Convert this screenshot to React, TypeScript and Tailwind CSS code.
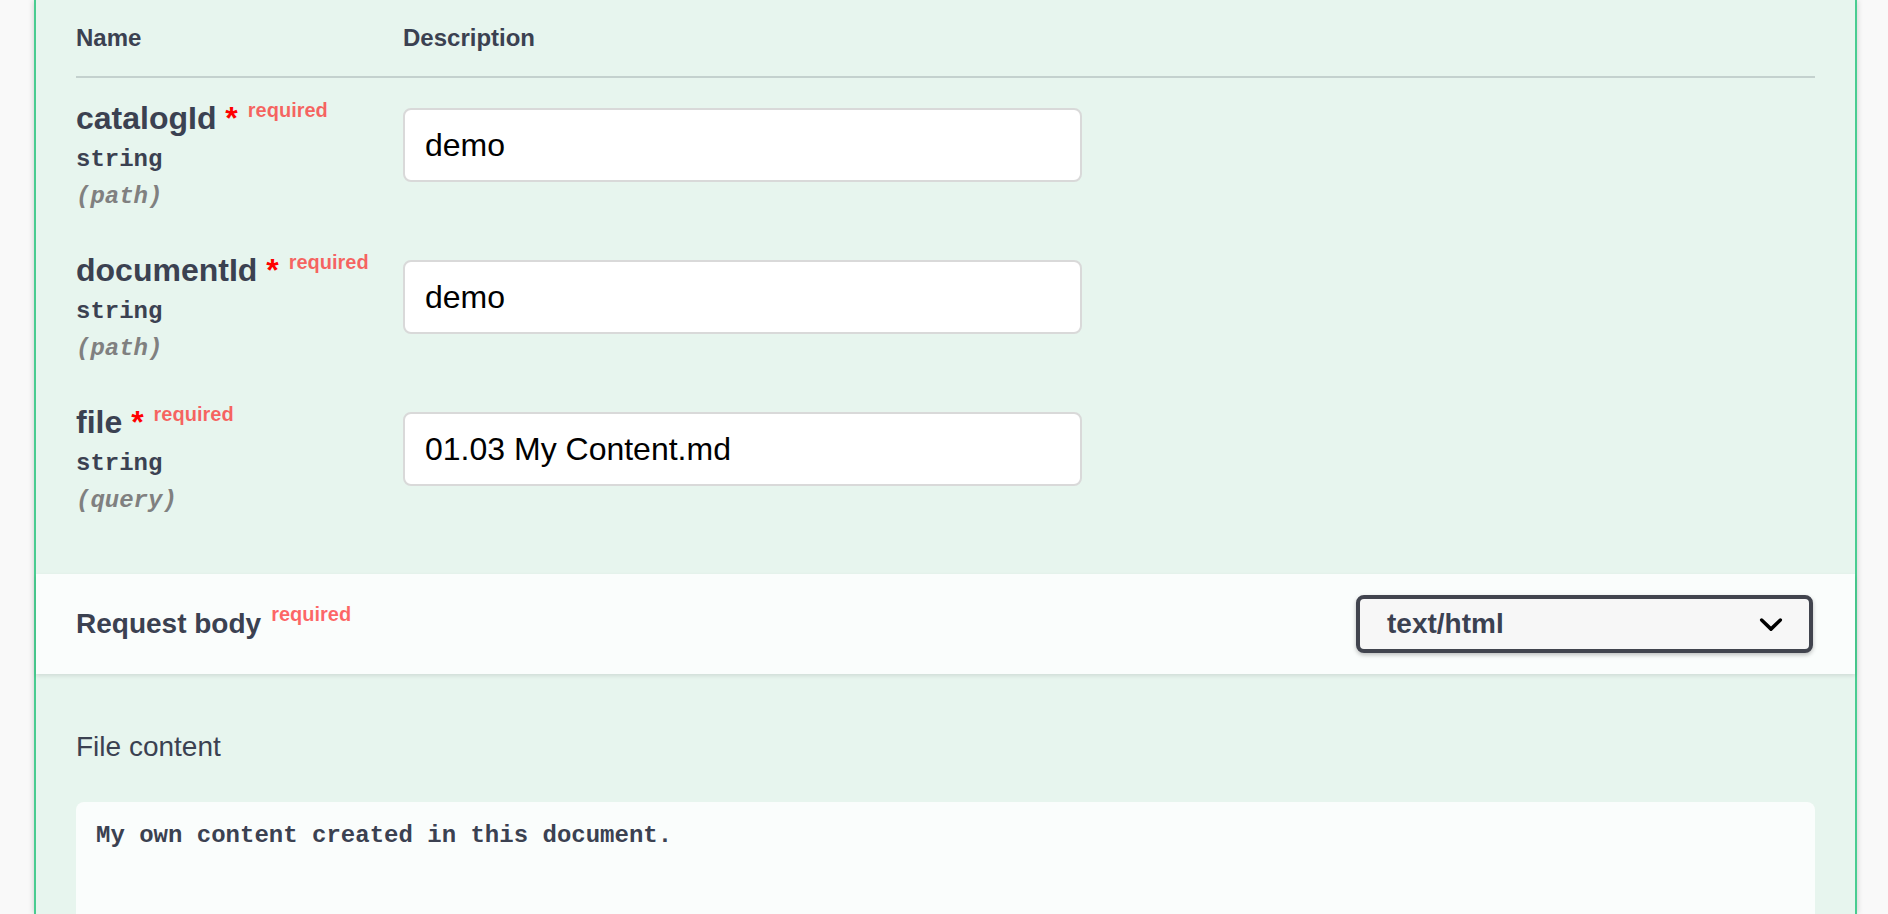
import React from "react";

function Required() {
  return (
    <span className="relative -top-[12px] px-[10px] text-[20px] font-bold text-[rgba(255,0,0,0.6)]">
      required
    </span>
  );
}

function ParamRow({ name, type, loc, value }: { name: string; type: string; loc: string; value: string }) {
  return (
    <div className="flex h-[152px] pt-[20px]">
      <div className="w-[327px] shrink-0">
        <div className="whitespace-nowrap text-[32px] font-bold leading-[40px] text-[#3b4151]">
          {name}
          <span className="text-[#ff0000]">&nbsp;*</span>
          <Required />
        </div>
        <div className="mt-[4px] font-['Liberation_Mono','Courier_New',monospace] text-[24px] font-bold leading-[28px] text-[#3b4151]">
          {type}
        </div>
        <div className="mt-[9px] font-['Liberation_Mono','Courier_New',monospace] text-[24px] font-bold italic leading-[28px] text-[#808080]">
          ({loc})
        </div>
      </div>
      <div className="pt-[10px]">
        <input
          readOnly
          defaultValue={value}
          className="h-[74px] w-[679px] rounded-[8px] border-2 border-[#d9d9d9] bg-white px-[20px] text-[32px] text-black outline-none"
        />
      </div>
    </div>
  );
}

export default function App() {
  return (
    <div className="h-[914px] w-[1888px] overflow-hidden bg-[#f9f9f9] font-['Liberation_Sans',Arial,sans-serif] text-[#3b4151]">
      <div className="ml-[34px] h-full w-[1823px] border-x-2 border-[#49cc90] bg-[#e7f5ee] shadow-[0_0_6px_rgba(0,0,0,0.19)]">
        <div className="px-[40px] pb-[40px]">
          <div className="flex h-[78px] items-center border-b-2 border-[rgba(59,65,81,0.2)] text-[24px] font-bold">
            <div className="w-[327px] shrink-0">Name</div>
            <div>Description</div>
          </div>
          <ParamRow name="catalogId" type="string" loc="path" value="demo" />
          <ParamRow name="documentId" type="string" loc="path" value="demo" />
          <ParamRow name="file" type="string" loc="query" value="01.03 My Content.md" />
        </div>

        <div className="flex h-[100px] items-center justify-between bg-[rgba(255,255,255,0.8)] pl-[40px] pr-[42px] shadow-[0_2px_4px_rgba(0,0,0,0.1)]">
          <div className="whitespace-nowrap text-[28px] font-bold">
            Request body
            <span className="relative -top-[12px] px-[10px] text-[20px] font-bold text-[rgba(255,0,0,0.6)]">required</span>
          </div>
          <div className="relative flex h-[58px] w-[457px] items-center rounded-[8px] border-4 border-[#41444e] bg-[#f7f7f7] pl-[27px] text-[28px] font-bold shadow-[0_2px_4px_rgba(0,0,0,0.25)]">
            text/html
            <svg
              className="absolute right-[14px] top-1/2 h-[48px] w-[48px] -translate-y-1/2"
              viewBox="0 0 20 20"
            >
              <path
                fill="#000"
                d="M13.418 7.859a.695.695 0 01.978 0 .68.68 0 010 .969l-3.908 3.83a.697.697 0 01-.979 0l-3.908-3.83a.68.68 0 010-.969.695.695 0 01.978 0L10 11z"
              />
            </svg>
          </div>
        </div>

        <div className="px-[40px] pt-[57px]">
          <div className="text-[28px] leading-[32px]">File content</div>
          <div className="mt-[39px] h-[560px] rounded-[8px] bg-[rgba(255,255,255,0.8)] p-[20px] font-['Liberation_Mono','Courier_New',monospace] text-[24px] font-bold leading-[27px] text-[#3b4151]">
            My own content created in this document.
          </div>
        </div>
      </div>
    </div>
  );
}
